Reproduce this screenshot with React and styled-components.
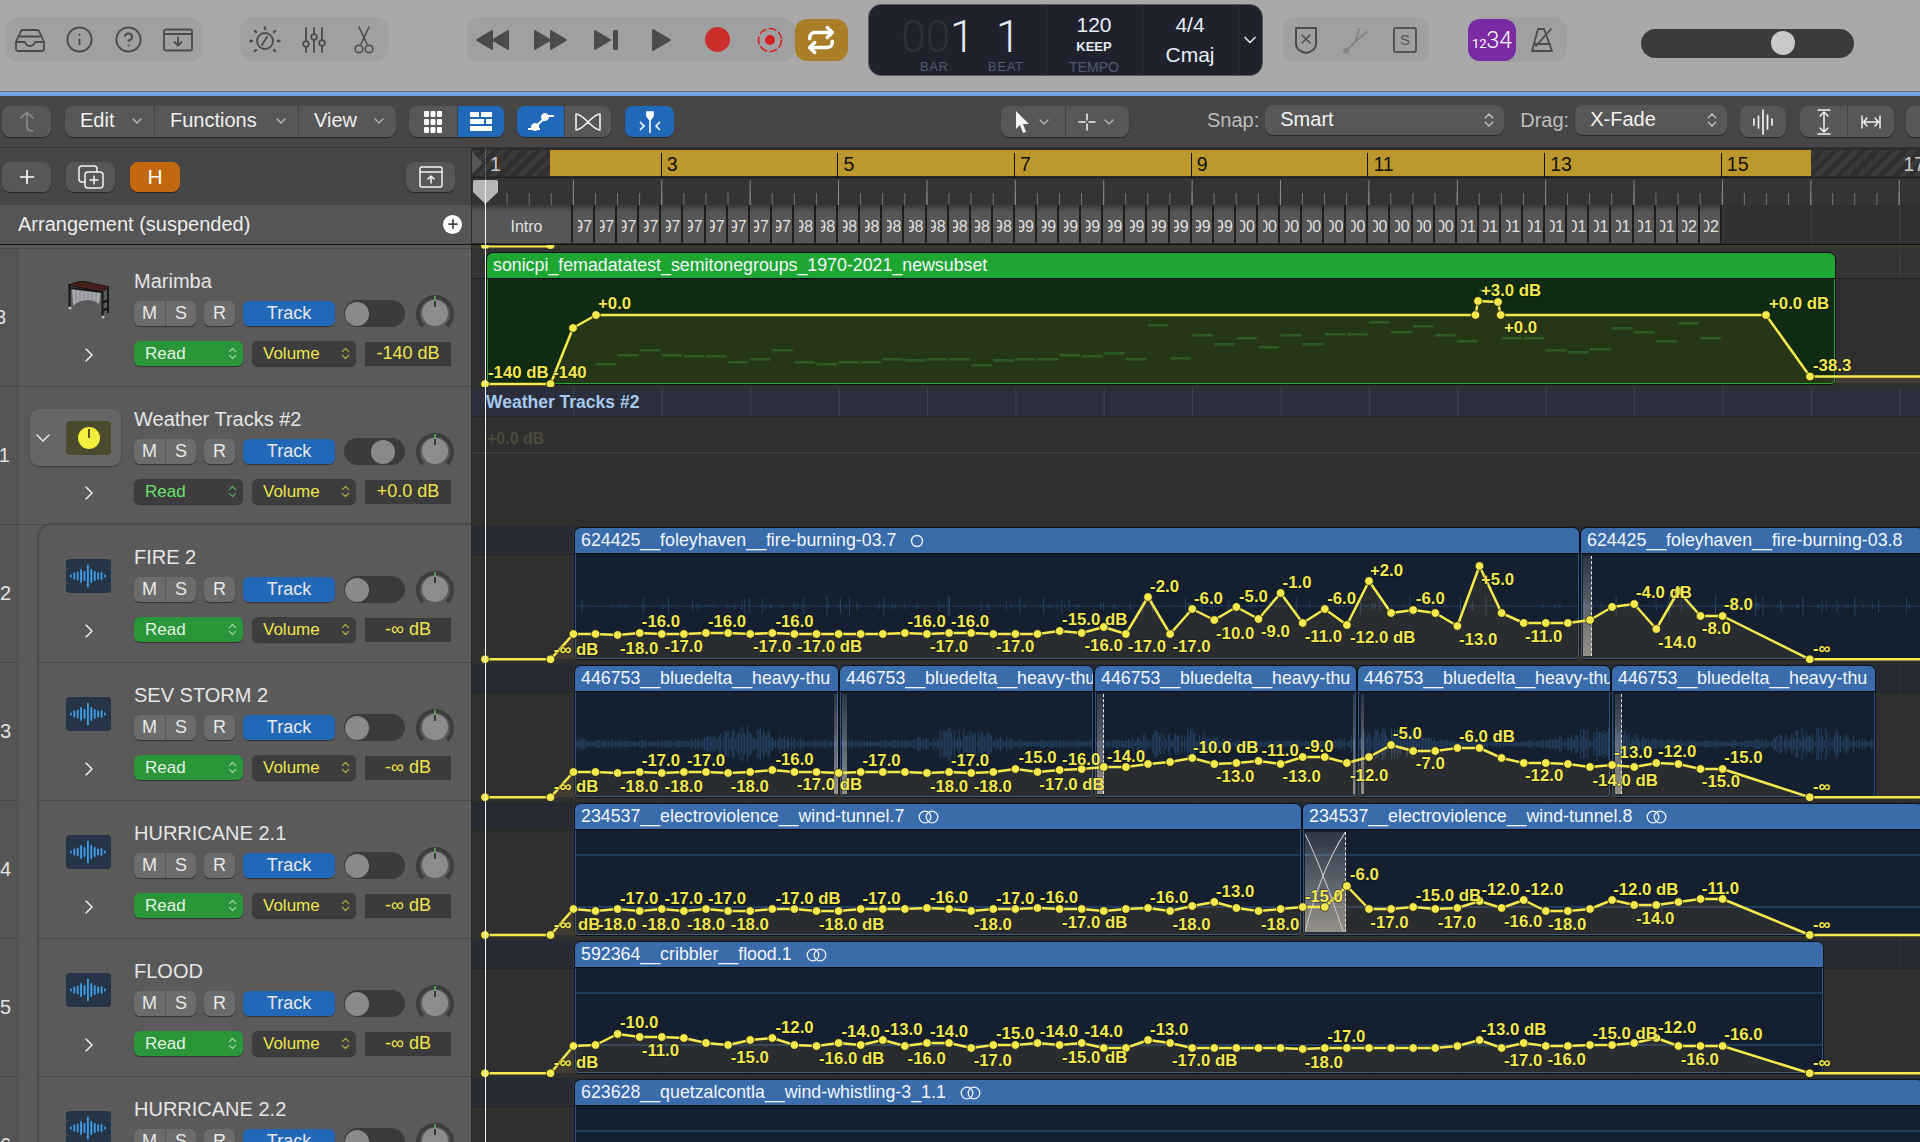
import styled, { createGlobalStyle } from 'styled-components'
import { ChevronDown, ChevronRight, ChevronsUpDown, CircleHelp, Info, Plus, Repeat } from 'lucide-react'

const BAR = 88.4
const BEAT = 22.1
const FIRST_BEAT = 573.4
const SANS = '"Liberation Sans", Arial, sans-serif'

const GlobalStyle = createGlobalStyle`
  html, body { margin: 0; padding: 0; background: #2f2f2f; }
  * { box-sizing: border-box; }
`

const Page = styled.div`
  width: 1920px;
  height: 1142px;
  overflow: hidden;
  display: flex;
  flex-direction: column;
  font-family: ${SANS};
  color: #e4e4e4;
`

/* top toolbar */
const TopBar = styled.div`
  height: 92px;
  flex: none;
  display: flex;
  align-items: center;
  padding: 0 0 12px 5px;
  background: #a9a9a9;
  border-bottom: 1px solid #6e6e6e;
`
const ToolGroup = styled.div`
  display: flex;
  align-items: center;
  flex: none;
  height: 45px;
  margin-left: ${p => p.$ml || 0}px;
  border-radius: 14px;
  background: #a0a0a0;
`
const ToolSlot = styled.div`
  width: ${p => p.$w || 49.5}px;
  height: 45px;
  flex: none;
  display: flex;
  align-items: center;
  justify-content: center;
  color: #4b4b4b;
`
const CycleButton = styled.div`
  width: 53px;
  height: 42px;
  flex: none;
  display: flex;
  align-items: center;
  justify-content: center;
  border-radius: 12px;
  background: #a97e27;
  color: #fff;
`
const Lcd = styled.div`
  width: 395px;
  height: 72px;
  flex: none;
  margin-left: 20px;
  display: flex;
  border-radius: 13px;
  background: #1f222c;
  border: 1px solid #5a5c62;
`
const LcdBar = styled.div`
  width: 108px;
  flex: none;
  padding-top: 13px;
`
const LcdBeat = styled.div`
  width: 70px;
  flex: none;
  padding-top: 13px;
  border-right: 1px solid #2c303b;
`
const Digits = styled.div`
  font-family: Roboto, ${SANS};
  font-weight: 300;
  font-size: 44px;
  line-height: 38px;
  color: #e4edf8;
  text-align: right;
  padding-right: ${p => p.$pr}px;
  span { color: #2c313d; }
`
const LcdLabel = styled.div`
  font-size: 13px;
  line-height: 16px;
  margin-top: 3px;
  letter-spacing: 0.6px;
  color: #4f5b70;
  text-align: right;
  padding-right: ${p => p.$pr}px;
`
const LcdColumn = styled.div`
  width: 96px;
  flex: none;
  display: flex;
  flex-direction: column;
  align-items: center;
  padding-top: 9px;
  border-right: 1px solid #2c303b;
`
const LcdValue = styled.div`
  font-size: ${p => p.$size || 21}px;
  line-height: 22px;
  margin-top: ${p => p.$mt || 0}px;
  color: ${p => p.$dim ? '#4f5b70' : '#e8eef6'};
  font-weight: ${p => p.$bold ? 700 : 400};
`
const LcdMore = styled.div`
  flex: 1;
  display: flex;
  align-items: center;
  justify-content: center;
  color: #dfe6f0;
`
const CountIn = styled.div`
  width: 48px;
  height: 42px;
  flex: none;
  display: flex;
  align-items: baseline;
  justify-content: center;
  padding-top: 8px;
  border-radius: 12px;
  background: #7a2ba4;
  color: #fff;
  font-family: Roboto, ${SANS};
  font-size: 23px;
  font-weight: 300;
  span { font-size: 13px; font-weight: 400; }
`
const VolumeTrack = styled.div`
  width: 213px;
  height: 29px;
  flex: none;
  margin: 7px 0 0 74px;
  padding-left: 130px;
  display: flex;
  align-items: center;
  border-radius: 15px;
  background: #3b3b3b;
`
const VolumeThumb = styled.div`
  width: 24px;
  height: 24px;
  border-radius: 50%;
  background: #c8c8c8;
`
const BlueRule = styled.div`
  height: 4px;
  flex: none;
  background: #6ea7e6;
`

/* control bar */
const ControlBar = styled.div`
  height: 52px;
  flex: none;
  display: flex;
  align-items: flex-start;
  padding: 10px 0 0 2px;
  background: #464646;
  border-bottom: 1px solid #333;
`
const Seg = styled.div`
  display: flex;
  flex: none;
  height: 31px;
  margin-left: ${p => p.$ml || 0}px;
  border-radius: 8px;
  overflow: hidden;
  background: #575757;
  box-shadow: 0 1px 1px rgba(0, 0, 0, 0.45);
`
const SegItem = styled.div`
  width: ${p => p.$w}px;
  flex: none;
  display: flex;
  align-items: center;
  justify-content: ${p => p.$menu ? 'space-between' : 'center'};
  gap: ${p => p.$gap || 0}px;
  padding: ${p => p.$menu ? '0 9px 2px 15px' : 0};
  font-size: 20px;
  color: #f0f0f0;
  background: ${p => p.$on ? '#2068b8' : 'transparent'};
  & + & { border-left: 1px solid #434343; }
  svg.chev { color: #b5b5b5; }
`
const BarLabel = styled.div`
  flex: none;
  height: 31px;
  line-height: 28px;
  margin-left: ${p => p.$ml}px;
  font-size: 20px;
  color: #bdbdbd;
`
const SelectBox = styled.div`
  width: ${p => p.$w}px;
  height: 30px;
  flex: none;
  margin: -1px 0 0 ${p => p.$ml}px;
  padding: 0 6px 1px 15px;
  display: flex;
  align-items: center;
  justify-content: space-between;
  border-radius: 8px;
  background: #575757;
  box-shadow: 0 1px 1px rgba(0, 0, 0, 0.45);
  font-size: 20px;
  color: #f2f2f2;
  svg { color: #bdbdbd; }
`

/* main split */
const Main = styled.div`
  flex: 1;
  min-height: 0;
  display: flex;
`
const LeftPanel = styled.div`
  width: 472px;
  flex: none;
  display: flex;
  flex-direction: column;
  border-right: 1px solid #2a2a2a;
  background: #5a5a5a;
`
const PanelTools = styled.div`
  height: 57px;
  flex: none;
  display: flex;
  align-items: flex-start;
  padding: 14px 16px 0 2px;
  background: #464646;
`
const PanelButton = styled.div`
  width: ${p => p.$w || 49}px;
  height: 30px;
  flex: none;
  display: flex;
  align-items: center;
  justify-content: center;
  margin-left: ${p => p.$auto ? 'auto' : `${p.$ml || 0}px`};
  border-radius: 8px;
  font-size: 21px;
  color: #fff;
  background: ${p => p.$accent ? '#c2680f' : '#575757'};
  box-shadow: 0 1px 1px rgba(0, 0, 0, 0.45);
`
const ArrangementHeader = styled.div`
  height: 40px;
  flex: none;
  display: flex;
  align-items: center;
  justify-content: space-between;
  padding: 0 9px 1px 18px;
  font-size: 20px;
  background: #555;
  border-bottom: 1px solid #111;
  color: #ececec;
`
const AddCircle = styled.div`
  width: 19px;
  height: 19px;
  display: flex;
  align-items: center;
  justify-content: center;
  border-radius: 50%;
  background: #fff;
  color: #444;
`
const PanelPeek = styled.div`
  height: 4px;
  flex: none;
  background: #5a5a5a;
  border-bottom: 1px solid #474747;
`

/* track header row */
const TrackRowWrap = styled.div`
  height: 138px;
  flex: none;
  display: flex;
`
const TrackNumber = styled.div`
  width: 18px;
  flex: none;
  display: flex;
  align-items: center;
  justify-content: flex-end;
  overflow: hidden;
  padding-right: ${p => p.$pr}px;
  font-size: 20px;
  background: #555;
  color: #e2e2e2;
  border-right: 1px solid #474747;
  border-bottom: 1px solid #474747;
  white-space: nowrap;
`
const TrackIndent = styled.div`
  width: 19px;
  flex: none;
  background: #5a5a5a;
`
const TrackBody = styled.div`
  flex: 1;
  min-width: 0;
  display: flex;
  margin-top: ${p => p.$first ? '-2px' : 0};
  background: #5a5a5a;
  border-bottom: 1px solid #474747;
  border-left: ${p => p.$nested ? '2px solid #4a4a4a' : 'none'};
  border-top: ${p => p.$first ? '2px solid #4a4a4a' : 'none'};
  border-top-left-radius: ${p => p.$first ? '15px' : 0};
`
const IconColumn = styled.div`
  flex: 1;
  min-width: 0;
  margin-right: 13px;
  padding-top: 22px;
`
const IconFrame = styled.div`
  height: 57px;
  max-width: 91px;
  margin-left: auto;
  display: flex;
  align-items: center;
  justify-content: flex-end;
  padding-right: 10px;
  position: relative;
  border-radius: 9px;
  background: ${p => p.$folder ? '#666' : 'transparent'};
  box-shadow: ${p => p.$folder ? '0 1px 2px rgba(0,0,0,.35)' : 'none'};
`
const FolderToggle = styled(ChevronDown)`
  position: absolute;
  left: 1px;
  top: 17px;
  color: #e8e8e8;
`
const ExpandRow = styled.div`
  width: 45px;
  height: 16px;
  margin: 19px 10px 0 auto;
  display: flex;
  align-items: center;
  justify-content: center;
  color: #ececec;
`
const TrackIconBox = styled.div`
  width: 45px;
  height: 34px;
  display: flex;
  align-items: center;
  justify-content: center;
  border-radius: 4px;
  background: ${p => p.$tone || 'transparent'};
`
const Controls = styled.div`
  width: 337px;
  flex: none;
  padding-top: 20px;
`
const TrackTitle = styled.div`
  height: 24px;
  line-height: 24px;
  font-size: 20px;
  color: #e6e6e6;
  white-space: nowrap;
`
const ControlLine = styled.div`
  height: 25px;
  display: flex;
  align-items: center;
  margin-top: ${p => p.$mt}px;
`
const SmallGroup = styled.div`
  height: 25px;
  flex: none;
  display: flex;
  margin-left: ${p => p.$ml || 0}px;
  border-radius: 6px;
  overflow: hidden;
  background: #6c6c6c;
  box-shadow: 0 1px 1px rgba(0, 0, 0, 0.45);
`
const SmallKey = styled.div`
  width: ${p => p.$w}px;
  display: flex;
  align-items: center;
  justify-content: center;
  font-size: 18px;
  color: #e8e8e8;
  background: ${p => p.$blue ? '#2268b8' : 'transparent'};
  & + & { border-left: 1px solid #555; }
`
const Toggle = styled.div`
  width: 61px;
  height: 27px;
  flex: none;
  margin-left: 9px;
  padding: 0 1px;
  display: flex;
  align-items: center;
  justify-content: ${p => p.$on ? 'flex-end' : 'flex-start'};
  padding-right: ${p => p.$on ? '10px' : '1px'};
  border-radius: 14px;
  background: #3b3b3b;
  div {
    width: 24px;
    height: 24px;
    border-radius: 50%;
    background: #8a8a8a;
  }
`
const KnobSvg = styled.svg`
  flex: none;
  margin: -2px 0 0 11px;
`
const PopUp = styled.div`
  width: ${p => p.$w}px;
  height: 25px;
  flex: none;
  margin-left: ${p => p.$ml || 0}px;
  padding: 0 3px 0 11px;
  display: flex;
  align-items: center;
  justify-content: space-between;
  border-radius: 6px;
  font-size: 17px;
  color: ${p => p.$color};
  background: ${p => p.$bg};
  box-shadow: 0 1px 1px rgba(0, 0, 0, 0.45);
  svg { opacity: 0.65; }
`
const ValueBox = styled.div`
  width: 86px;
  height: 24px;
  flex: none;
  margin-left: 9px;
  display: flex;
  align-items: center;
  justify-content: center;
  font-size: 18px;
  color: #f0e44c;
  background: #3b3b3b;
`

/* timeline */
const Timeline = styled.div`
  position: relative;
  flex: 1;
  min-width: 0;
  display: flex;
  flex-direction: column;
  background: #2f2f2f;
`
const RulerTop = styled.div`
  position: relative;
  height: 30px;
  flex: none;
  display: flex;
  padding: 2px 0 1px;
  background: #2c2c2c;
  border-bottom: 1px solid #1c1c1c;
`
const Hatch = styled.div`
  width: ${p => p.$w ? `${p.$w}px` : 'auto'};
  flex: ${p => p.$w ? 'none' : 1};
  background: repeating-linear-gradient(135deg, #3a3a3a 0 5px, #303030 5px 10px);
`
const Cycle = styled.div`
  width: 1260.6px;
  flex: none;
  background: #bd982c;
`
const RulerNumbers = styled.div`
  position: absolute;
  inset: 0 0 0 12px;
  display: flex;
`
const RulerCell = styled.div`
  width: 176.7px;
  flex: none;
  height: 24px;
  margin-top: 5px;
  padding-left: 5px;
  line-height: 22px;
  font-size: 19.5px;
  color: ${p => p.$light ? '#c9c9c9' : '#111'};
  border-left: 1.5px solid ${p => p.$light ? 'transparent' : '#111'};
`
const StartFlag = styled.div`
  position: absolute;
  left: 0;
  top: 4px;
  width: 0;
  height: 0;
  border-top: 11px solid transparent;
  border-bottom: 11px solid transparent;
  border-left: 11px solid #565656;
`
const BeatStrip = styled.div`
  height: 27px;
  flex: none;
  background-color: #343434;
  background-image:
    linear-gradient(to right, #8a8a8a 1px, transparent 1px),
    linear-gradient(to right, #757575 1px, transparent 1px);
  background-size: ${BAR}px 25px, ${BEAT}px 12px;
  background-position: 12.5px bottom, 12.5px bottom;
  background-repeat: repeat-x;
`
const MarkerStrip = styled.div`
  height: 40px;
  flex: none;
  display: flex;
  padding-bottom: 1px;
  background-color: #303030;
  background-image: linear-gradient(to right, #3f3f3f 1px, transparent 1px);
  background-size: ${BAR}px 100%;
  background-position: 13px 0;
  border-bottom: 1px solid #111;
`
const Marker = styled.div`
  width: ${p => p.$w}px;
  flex: none;
  display: flex;
  align-items: center;
  justify-content: ${p => p.$intro ? 'center' : 'flex-end'};
  padding: ${p => p.$intro ? '5px 0 0 10px' : '5px 1px 0 0'};
  font-size: 16px;
  color: #e0e0e0;
  white-space: nowrap;
  background: linear-gradient(#3b3b3b, #565656 7px);
  border-right: 2px solid #1e1e1e;
`
const MarkerYear = styled.div`
  width: 14.5px;
  overflow: hidden;
  display: flex;
  justify-content: flex-end;
`
const LanePeek = styled.svg`
  height: 4px;
  width: 100%;
  flex: none;
  display: block;
  background: #3a392f;
`
const Lane = styled.div`
  position: relative;
  height: 138px;
  flex: none;
  overflow: hidden;
`
const LaneStrip = styled.div`
  height: 29px;
  margin-top: 1px;
  border-bottom: 1px solid #242424;
  background-color: ${p => p.$tone};
  background-image: linear-gradient(to right, ${p => p.$line} 1px, transparent 1px);
  background-size: ${BAR}px 100%;
  background-position: 13px 0;
  padding: 4px 0 0 14px;
  font-size: 17.5px;
  font-weight: 700;
  color: #a6c9f2;
`
const LaneGuide = styled.div`
  margin-top: 35px;
  height: 2px;
  background: #3b3b3b;
  position: relative;
`
const GhostValue = styled.div`
  position: absolute;
  left: 15px;
  top: -22px;
  font-size: 16px;
  font-weight: 700;
  color: #4b4a3b;
`
const Region = styled.div`
  position: absolute;
  top: ${p => p.$top || 2}px;
  left: ${p => p.$left}px;
  width: ${p => p.$width}px;
  height: 133px;
  display: flex;
  flex-direction: column;
  overflow: hidden;
  border: 1.5px solid #0e1116;
  border-radius: 7px 7px 5px 5px;
`
const RegionHeader = styled.div`
  height: 26px;
  flex: none;
  display: flex;
  align-items: center;
  gap: 14px;
  padding-left: 6px;
  overflow: hidden;
  white-space: nowrap;
  font-size: 17.8px;
  color: #f2f6fb;
  background: ${p => p.$bg};
  border-bottom: 1.5px solid #0a0d12;
`
const RegionBody = styled.div`
  flex: 1;
  min-height: 0;
  background: ${p => p.$bg};
  border: 1px solid ${p => p.$edge};
  border-top: none;
  border-radius: 0 0 4px 4px;
`
const WaveSvg = styled.svg`
  display: block;
  width: 100%;
  height: 100%;
`
const Crossfade = styled.div`
  position: absolute;
  top: 31px;
  left: ${p => p.$left}px;
  width: ${p => p.$width}px;
  height: 100px;
  background: linear-gradient(to top, rgba(215, 215, 215, 0.6), rgba(215, 215, 215, 0.12));
  border-right: ${p => p.$dashed ? '1px dashed #e6e6e6' : 'none'};
  svg { display: block; width: 100%; height: 100%; }
`
const AutomationSvg = styled.svg`
  position: absolute;
  left: 0;
  top: 0;
  pointer-events: none;
`
const AutoLabel = styled.text`
  font-family: ${SANS};
  font-size: 16.8px;
  font-weight: 700;
  fill: #f3e84f;
  stroke: rgba(0, 0, 0, 0.45);
  stroke-width: 1.5px;
  paint-order: stroke;
  dominant-baseline: central;
`
const PlayheadLine = styled.div`
  position: absolute;
  left: 12.5px;
  top: 32px;
  bottom: 0;
  width: 1.5px;
  background: #f4f4f4;
  z-index: 6;
`
const PlayheadHead = styled.svg`
  position: absolute;
  left: 0;
  top: 31px;
  z-index: 5;
`
const PlayheadDots = styled.div`
  position: absolute;
  left: 13px;
  top: 0;
  height: 31px;
  border-left: 1px dotted #8a8a8a;
`

/* drawings */
const Line = ({ w, h, children, color = 'currentColor', sw = 1.8 }) => (
  <svg width={w} height={h} viewBox={`0 0 ${w} ${h}`} fill="none" stroke={color} strokeWidth={sw} strokeLinecap="round" strokeLinejoin="round">
    {children}
  </svg>
)
const TrayIcon = () => (
  <Line w={32} h={24}>
    <path d="M2 14 7 3a2 2 0 0 1 2-1h14a2 2 0 0 1 2 1l5 11v7a2 2 0 0 1-2 2H4a2 2 0 0 1-2-2Z" />
    <path d="M2 14h9c1 3 2.5 4 5 4s4-1 5-4h9M6 8.5h20" />
  </Line>
)
const WindowDownIcon = () => (
  <Line w={32} h={24}>
    <rect x="2" y="1.5" width="28" height="21" rx="2" />
    <path d="M2 6h28M16 9.5v8M12.5 14l3.5 3.5 3.500-3.500" />
  </Line>
)
const DialIcon = () => (
  <Line w={32} h={28}>
    <circle cx="16" cy="15" r="8" />
    <path d="m13 19 5-8" />
    <path d="M16 1.5v1.5M6 5l1 1M26 5l-1 1M1.5 15H3M29 15h1.5M6 25l1-1M26 25l-1-1" strokeWidth="2.4" />
  </Line>
)
const MixerIcon = () => (
  <Line w={24} h={28}>
    <path d="M4 2v24M12 2v24M20 2v24" />
    <circle cx="4" cy="18" r="2.8" fill="#a0a0a0" />
    <circle cx="12" cy="11" r="2.8" fill="#a0a0a0" />
    <circle cx="20" cy="17" r="2.8" fill="#a0a0a0" />
  </Line>
)
const ScissorsIcon = () => (
  <Line w={20} h={30} sw={1.6}>
    <path d="M15 2 7 19M5 2l8 17" />
    <circle cx="5" cy="24" r="3.8" />
    <circle cx="15" cy="24" r="3.8" />
  </Line>
)
const Glyph = ({ w, h, d }) => (
  <svg width={w} height={h} viewBox={`0 0 ${w} ${h}`} fill="currentColor" stroke="currentColor" strokeWidth="2" strokeLinejoin="round">
    <path d={d} />
  </svg>
)
const RecordIcon = () => (
  <svg width="25" height="25"><circle cx="12.5" cy="12.5" r="12.5" fill="#cc2f2b" /></svg>
)
const CaptureIcon = () => (
  <svg width="26" height="26" fill="none">
    <circle cx="13" cy="13" r="11.5" stroke="#d3211f" strokeWidth="1.6" strokeDasharray="8 2.5" />
    <circle cx="13" cy="13" r="5" fill="#d3211f" />
  </svg>
)
const ShieldIcon = () => (
  <Line w={24} h={30} sw={2}>
    <path d="M2 3h20v16c0 5-5 8-10 9-5-1-10-4-10-9Z" />
    <path d="m8 10 8 8M16 10l-8 8" strokeWidth="1.5" />
  </Line>
)
const ForkIcon = () => (
  <Line w={28} h={30} color="#858585" sw={2}>
    <path d="m5 25 9-9M14 16l3-12M14 16l11-9" />
    <circle cx="4" cy="26" r="2" fill="#858585" />
  </Line>
)
const SoloBoxIcon = () => (
  <svg width="24" height="26" fill="none">
    <rect x="1" y="1" width="22" height="24" rx="2" stroke="#555" strokeWidth="2" />
    <text x="12" y="18" textAnchor="middle" fontSize="15" fontFamily={SANS} fill="#555">S</text>
  </svg>
)
const MetronomeIcon = () => (
  <Line w={26} h={28}>
    <path d="M9 3h6l8 22H3Z" />
    <path d="M6 18h15M3 25h20M7 20 22 3" />
  </Line>
)
const GridIcon = () => (
  <svg width="18" height="22" fill="#fff">
    {[0, 1, 2].flatMap(r => [0, 1, 2].map(c => <rect key={`${r}${c}`} x={c * 6.5} y={r * 8} width="5" height="6" rx="1" />))}
  </svg>
)
const ListIcon = () => (
  <svg width="22" height="20" fill="#fff">
    <rect width="9" height="5" /><rect x="11" width="11" height="5" />
    <rect y="7" width="14" height="5" /><rect x="16" y="7" width="6" height="5" />
    <rect y="14" width="22" height="5" />
  </svg>
)
const NodeIcon = () => (
  <svg width="28" height="22" fill="#fff" stroke="#fff">
    <path d="M7 17 19 6M1 18h12M18 5h9" strokeWidth="2" />
    <circle cx="8" cy="16" r="3.5" /><circle cx="18" cy="6" r="3.5" />
  </svg>
)
const FlexIcon = () => (
  <Line w={28} h={22} color="#f2f2f2" sw={1.6}>
    <path d="M2 3v16c8 0 16-16 24-16v16C18 19 10 3 2 3Z" />
  </Line>
)
const PinIcon = () => (
  <svg width="22" height="24" fill="none" stroke="#fff" strokeWidth="1.6">
    <path d="M8 2h6v4l-2 3h-2L8 6Z" fill="#fff" />
    <path d="M11 9v14M1 12l4 4-4 4M21 12l-4 4 4 4" />
  </svg>
)
const PointerIcon = () => (
  <svg width="16" height="24" fill="#f4f4f4"><path d="M2 1v18l4-4 3 8 3-1-3-8h6Z" /></svg>
)
const CrossIcon = () => (
  <Line w={18} h={18} color="#f2f2f2" sw={1.5}>
    <path d="M9 1v6M9 11v6M1 9h6M11 9h6" />
  </Line>
)
const WaveButtonIcon = () => (
  <Line w={22} h={26} color="#f0f0f0" sw={1.7}>
    <path d="M2 10v6M6.5 7v12M11 1v24M15.5 6v14M20 10v6" />
  </Line>
)
const ZoomVIcon = () => (
  <Line w={18} h={26} color="#f0f0f0" sw={1.5}>
    <path d="M3 1h12M3 25h12M9 3v20M5 7l4-4 4 4M5 19l4 4 4-4" />
  </Line>
)
const ZoomHIcon = () => (
  <Line w={20} h={16} color="#f0f0f0" sw={1.5}>
    <path d="M1 2v12M19 2v12M3 8h14M6 4 2.5 8 6 12M14 4l3.5 4L14 12" />
  </Line>
)
const UpTurnIcon = () => (
  <Line w={18} h={24} color="#8d8d8d" sw={1.6}>
    <path d="M9 2 3 8M9 2l6 6M9 2v14c0 3 2 5 6 5" />
  </Line>
)
const StackPlusIcon = () => (
  <Line w={26} h={24} color="#f4f4f4" sw={1.5}>
    <rect x="1" y="1" width="18" height="16" rx="3" />
    <rect x="7" y="7" width="18" height="16" rx="3" fill="#575757" />
    <path d="M16 11v8M12 15h8" />
  </Line>
)
const BoxUpIcon = () => (
  <Line w={24} h={24} color="#f4f4f4" sw={1.5}>
    <rect x="1" y="2" width="22" height="20" rx="2" />
    <path d="M1 7h22M12 18v-7M9 14l3-3 3 3" />
  </Line>
)
const MarimbaIcon = () => (
  <svg width="42" height="38" viewBox="0 0 42 38" fill="none">
    <path d="M4 7 33 11 31 23C24 17 12 18 5 25Z" fill="#b9bcc2" opacity="0.8" />
    <path d="M8 9v13M12 9v11M16 10v9M20 10v8M24 10v9M28 11v10" stroke="#83868c" strokeWidth="1" />
    <path d="M0 4 14 0 41 6 34 11Z" fill="#45201a" stroke="#1c0f0c" strokeWidth="1" />
    <path d="M1.5 5v21M34.5 11v24M40 7v25M2 7l32 4M34 22l6-3M34 30l6-3" stroke="#171717" strokeWidth="2" />
    <circle cx="2" cy="27" r="1.5" fill="#bbb" /><circle cx="35" cy="36" r="1.5" fill="#bbb" />
  </svg>
)
const WaveTrackIcon = () => (
  <svg width="37" height="24" fill="#3f9fe8">
    {[3, 7, 9, 14, 10, 23, 14, 10, 7, 8, 3].map((h, i) => (
      <rect key={i} x={i * 3.4} y={12 - h / 2} width="1.8" height={h} rx="0.9" />
    ))}
  </svg>
)
const ClockIcon = () => (
  <svg width="24" height="24">
    <circle cx="12" cy="12" r="11" fill="#f4ee3c" />
    <path d="M12 3v9" stroke="#222" strokeWidth="1.5" />
  </svg>
)
const Knob = () => (
  <KnobSvg width="38" height="38" viewBox="0 0 38 38" fill="none">
    <path d="M7 32a17 17 0 1 1 24 0" stroke="#3d3d3d" strokeWidth="4" />
    <circle cx="19" cy="19" r="13" fill="#8c8c8c" />
    <path d="M19 2v5" stroke="#5fd25f" strokeWidth="1.2" />
    <path d="M19 7v6" stroke="#1c1c1c" strokeWidth="1.5" />
  </KnobSvg>
)
const LoopCircle = () => (
  <svg width="14" height="16" fill="none" stroke="#eef3fa" strokeWidth="1.4"><ellipse cx="7" cy="8" rx="5.5" ry="5.5" /></svg>
)
const LinkedCircles = () => (
  <svg width="22" height="16" fill="none" stroke="#eef3fa" strokeWidth="1.3">
    <circle cx="7" cy="8" r="5.8" /><circle cx="14" cy="8" r="5.8" />
  </svg>
)

/* deterministic wave shapes */
const noise = i => {
  const s = Math.sin(i * 12.9898) * 43758.5453
  return s - Math.floor(s)
}
const wavePath = (width, kind, origin) => {
  let d = ''
  for (let x = 0; x < width; x += 1.5) {
    const n = noise(Math.round((x + origin) / 1.5))
    let a
    if (kind === 'heavy') {
      const env = Math.abs(Math.sin((x + origin) / 68))
      a = 1.5 + n * (2.5 + Math.pow(env, 6) * 14)
    } else {
      a = 0.7 + Math.pow(n, 16) * 10
    }
    d += `M${x} ${52 - a}V${52 + a}`
  }
  return d
}
const RegionWave = ({ width, kind, origin }) => (
  <WaveSvg viewBox={`0 0 ${width} 104`} preserveAspectRatio="none">
    {kind === 'stereo'
      ? <path d={`M0 25H${width}M0 77H${width}`} stroke="#27456c" strokeWidth="1.5" />
      : kind && <path d={wavePath(width, kind, origin)} stroke="#29466c" strokeWidth="0.9" fill="none" />}
  </WaveSvg>
)

/* automation */
const Automation = ({ ys, start, end, labels, notes }) => {
  const beats = ys.map((y, i) => [FIRST_BEAT + i * BEAT, y])
  const pts = [[485, start], [550.5, start], ...beats, ...end]
  const tail = pts[pts.length - 1]
  const line = [...pts, [1920, tail[1]]].map(p => p.join(',')).join(' ')
  return (
    <AutomationSvg width="1448" height="138" viewBox="472 0 1448 138">
      <polygon points={`485,134 ${line} 1920,134`} fill="rgba(240, 170, 50, 0.1)" />
      {notes && notes.map((y, i) => (
        <rect key={i} x={FIRST_BEAT + (i + 1) * BEAT} y={y} width="20.5" height="2.6" fill="#2e5a25" />
      ))}
      <polyline points={line} fill="none" stroke="#f5e94e" strokeWidth="2.5" strokeLinejoin="round" />
      {pts.map((p, i) => (
        <circle key={i} cx={p[0]} cy={p[1]} r="4.3" fill="#f5e94e" stroke="#1c1c10" strokeWidth="0.7" />
      ))}
      {labels.map((l, i) => <AutoLabel key={i} x={l[1]} y={l[2]}>{l[0]}</AutoLabel>)}
    </AutomationSvg>
  )
}

/* data */
const TRACKS = [
  { name: 'Marimba', number: '3', pr: 11, icon: 'marimba', value: '-140 dB' },
  { name: 'Weather Tracks #2', number: '11', pr: 7, icon: 'folder', on: true, value: '+0.0 dB', muted: true },
  { name: 'FIRE 2', number: '2', pr: 6, icon: 'wave', nested: true, first: true, value: '-∞ dB' },
  { name: 'SEV STORM 2', number: '3', pr: 6, icon: 'wave', nested: true, value: '-∞ dB' },
  { name: 'HURRICANE 2.1', number: '4', pr: 6, icon: 'wave', nested: true, value: '-∞ dB' },
  { name: 'FLOOD', number: '5', pr: 6, icon: 'wave', nested: true, value: '-∞ dB' },
  { name: 'HURRICANE 2.2', number: '6', pr: 6, icon: 'wave', nested: true, value: '-∞ dB' },
]

const MARKER_YEARS = [1997, 1998, 1999, 2000, 2001].flatMap(y => Array(10).fill(y)).concat([2002, 2002])
const RULER_BARS = [1, 3, 5, 7, 9, 11, 13, 15, 17]

const MARIMBA_AUTO = {
  ys: [],
  start: 135,
  end: [[573, 79], [596, 66], [1475.5, 66], [1478, 52], [1498, 53], [1500.7, 66], [1766, 66], [1810, 127.5]],
  notes: [114, 105, 100, 105, 106, 106, 112, 109, 100, 112, 114, 112, 112, 109, 110, 109, 109, 115, 110, 109, 109, 105, 106, 103, 109, 75, 108, 85,
    94, 88, 97, 85, 94, 84, 84, 72, 82, 76, 85, 91, 40, 88, 88, 100, 102, 99, 78, 82, 91, 73, 88],
  labels: [
    ['+0.0', 598, 54], ['-140 dB', 488, 123], ['-140', 553, 123], ['+3.0 dB', 1481, 41],
    ['+0.0', 1504, 78], ['+0.0 dB', 1769, 54], ['-38.3', 1813, 116],
  ],
}

const FIRE_AUTO = {
  start: 134.3,
  ys: [109, 109, 110, 108, 109, 109, 108, 108, 109, 108, 109, 109, 109, 109, 109, 108, 109, 108, 108, 109, 109, 109, 106, 108, 102, 109, 72, 109, 84,
    95, 82, 94, 68, 98, 84, 100, 56, 88, 85, 88, 101, 41, 88, 98, 98, 98, 95, 82, 79, 104, 66, 91, 91],
  end: [[1809.7, 134.3]],
  labels: [
    ['-∞ dB', 553.8, 124], ['-18.0', 620, 123.3], ['-17.0', 664.6, 121.7], ['-16.0', 641.8, 96], ['-16.0', 707.9, 96], ['-16.0', 775.4, 96],
    ['-17.0', 753, 121.7], ['-17.0 dB', 796.8, 121.7], ['-16.0', 907.6, 96], ['-16.0', 950.9, 96], ['-17.0', 929.9, 121.7], ['-17.0', 996, 121.7],
    ['-15.0 dB', 1062.1, 94.3], ['-16.0', 1084.5, 120.3], ['-17.0', 1127.8, 121.7], ['-2.0', 1150.1, 61.7], ['-17.0', 1172.4, 121.7],
    ['-6.0', 1194, 73.7], ['-10.0', 1216, 108.3], ['-5.0', 1239, 71], ['-9.0', 1261, 106.7], ['-1.0', 1282.6, 57], ['-11.0', 1304.7, 111.7],
    ['-6.0', 1327.2, 73.7], ['-12.0 dB', 1350, 112.3], ['+2.0', 1369.9, 45], ['-6.0', 1415.8, 73.3], ['-13.0', 1459, 114], ['+5.0', 1481, 54.3],
    ['-11.0', 1525, 111.3], ['-4.0 dB', 1636, 67.7], ['-14.0', 1658, 117.3], ['-8.0', 1724, 79.7], ['-8.0', 1701.8, 103.7], ['-∞', 1813, 123.7],
  ],
}

const STORM_AUTO = {
  start: 134.3,
  ys: [109, 109, 110, 109, 110, 109, 109, 110, 109, 107, 109, 109, 110, 109, 109, 109, 110, 109, 110, 109, 106, 109, 107, 106, 104, 104, 101, 99, 95,
    101, 100, 98, 101, 94, 94, 100, 94, 82, 88, 88, 85, 85, 95, 100, 100, 101, 104, 102, 104, 100, 101, 106, 106],
  end: [[1809.7, 134.3]],
  labels: [
    ['-∞ dB', 553.8, 123], ['-17.0', 641.8, 97.7], ['-17.0', 686.9, 97.7], ['-16.0', 775.4, 96], ['-18.0', 620, 123], ['-18.0', 664.6, 123],
    ['-18.0', 730.7, 123], ['-17.0 dB', 796.8, 121.7], ['-17.0', 862.4, 97.7], ['-17.0', 950.9, 97.7], ['-15.0', 1018.4, 94.7], ['-16.0', 1062.1, 96],
    ['-14.0', 1106.8, 93.7], ['-18.0', 929.9, 123], ['-18.0', 973.7, 123], ['-17.0 dB', 1039.3, 121.7], ['-10.0 dB', 1193, 84.3], ['-11.0', 1261.5, 87],
    ['-9.0', 1304.7, 83], ['-13.0', 1216, 113.7], ['-13.0', 1282.6, 113.7], ['-12.0', 1350, 112.7], ['-5.0', 1392.8, 70.7], ['-6.0 dB', 1459, 73.7],
    ['-7.0', 1415.8, 100.3], ['-12.0', 1525, 112.7], ['-14.0 dB', 1592.5, 117], ['-13.0', 1614, 89.7], ['-12.0', 1658, 88.3], ['-15.0', 1724.3, 94],
    ['-15.0', 1701.8, 118.3], ['-∞', 1813, 123],
  ],
}

const HURRICANE_AUTO = {
  start: 134,
  ys: [108, 110, 108, 110, 108, 110, 108, 110, 110, 108, 108, 110, 110, 108, 108, 108, 107, 108, 110, 108, 108, 107, 108, 108, 110, 108, 107, 110, 105,
    101, 107, 110, 108, 106, 106, 85, 108, 108, 106, 108, 107, 100, 107, 99, 110, 110, 108, 99, 104, 104, 101, 98, 98],
  end: [[1809.7, 134]],
  labels: [
    ['-∞', 553.8, 123.7], ['dB', 578, 123], ['-18.0', 598, 123], ['-18.0', 641.8, 123], ['-18.0', 686.9, 123], ['-18.0', 730.7, 123],
    ['-17.0', 620, 97.3], ['-17.0', 664.6, 97.3], ['-17.0', 707.9, 97.3], ['-17.0 dB', 775.4, 97.3], ['-17.0', 862.4, 97.3], ['-16.0', 929.9, 96],
    ['-17.0', 996, 97.3], ['-16.0', 1039.8, 96], ['-16.0', 1150.1, 96], ['-18.0 dB', 819, 123], ['-18.0', 973.7, 123], ['-17.0 dB', 1062.1, 121.7],
    ['-18.0', 1172.4, 123], ['-13.0', 1216, 90], ['-18.0', 1261, 123], ['-15.0', 1304.7, 95], ['-6.0', 1350, 73.3], ['-17.0', 1370.3, 121.7],
    ['-15.0 dB', 1415.8, 94.7], ['-17.0', 1437.8, 121.7], ['-12.0', 1481.4, 88.3], ['-12.0', 1525, 88.3], ['-16.0', 1504, 120], ['-18.0', 1548, 123],
    ['-12.0 dB', 1613.2, 88.3], ['-14.0', 1636, 117], ['-11.0', 1701.8, 87], ['-∞', 1813, 123.3],
  ],
}

const FLOOD_AUTO = {
  start: 134.3,
  ys: [107, 106, 95, 98, 98, 99, 104, 106, 101, 99, 106, 107, 104, 106, 101, 107, 104, 104, 109, 106, 106, 104, 106, 104, 109, 109, 101, 104, 109,
    109, 109, 109, 109, 110, 109, 109, 109, 109, 109, 109, 107, 101, 109, 104, 107, 107, 106, 106, 104, 99, 107, 107, 107],
  end: [[1809.7, 134.3]],
  labels: [
    ['-∞ dB', 553.8, 123], ['-10.0', 620, 83.7], ['-11.0', 641.8, 111], ['-15.0', 730.7, 118.3], ['-12.0', 775.4, 88.3], ['-14.0', 841.5, 92.7],
    ['-16.0 dB', 819, 119.7], ['-13.0', 884.3, 90], ['-14.0', 929.9, 92.7], ['-16.0', 907.6, 119.7], ['-17.0', 973.7, 121], ['-15.0', 996, 94.3],
    ['-14.0', 1039.8, 92.7], ['-14.0', 1084.5, 92.7], ['-15.0 dB', 1062.1, 118.3], ['-13.0', 1150.1, 90], ['-17.0 dB', 1172, 121.7], ['-17.0', 1327.2, 97],
    ['-18.0', 1304.7, 123], ['-13.0 dB', 1481, 90], ['-17.0', 1504, 121], ['-16.0', 1547.5, 120], ['-15.0 dB', 1592.5, 94.3], ['-12.0', 1658, 88.3],
    ['-16.0', 1724.3, 95.7], ['-16.0', 1680.7, 120], ['-∞', 1813, 123],
  ],
}

const STORM_NAME = '446753__bluedelta__heavy-thu'
const AUDIO_LANES = [
  {
    auto: FIRE_AUTO,
    regions: [
      { x: 574, to: 1580, name: '624425__foleyhaven__fire-burning-03.7', icon: 'loop', wave: 'mono' },
      { x: 1580, to: 1924, name: '624425__foleyhaven__fire-burning-03.8', wave: 'mono' },
    ],
    fades: [{ x: 1583, to: 1592, dashed: true }],
  },
  {
    auto: STORM_AUTO,
    regions: [
      { x: 574, to: 839, name: STORM_NAME, wave: 'heavy' },
      { x: 839, to: 1094, name: STORM_NAME, wave: 'heavy' },
      { x: 1094, to: 1357, name: STORM_NAME, wave: 'heavy' },
      { x: 1357, to: 1611, name: STORM_NAME, wave: 'heavy' },
      { x: 1611, to: 1876, name: STORM_NAME, wave: 'heavy' },
    ],
    fades: [
      { x: 834, to: 838 }, { x: 842, to: 847 }, { x: 1097, to: 1104, dashed: true }, { x: 1353, to: 1355 }, { x: 1361, to: 1364 }, { x: 1615, to: 1622, dashed: true },
    ],
  },
  {
    auto: HURRICANE_AUTO,
    regions: [
      { x: 574, to: 1302, name: '234537__electroviolence__wind-tunnel.7', icon: 'linked', wave: 'stereo' },
      { x: 1302, to: 1924, name: '234537__electroviolence__wind-tunnel.8', icon: 'linked', wave: 'stereo' },
    ],
    fades: [{ x: 1304.7, to: 1346, dashed: true, cross: true }],
  },
  {
    auto: FLOOD_AUTO,
    regions: [{ x: 574, to: 1824, name: '592364__cribbler__flood.1', icon: 'linked', wave: 'stereo' }],
    fades: [],
  },
  {
    regions: [{ x: 574, to: 1924, name: '623628__quetzalcontla__wind-whistling-3_1.1', icon: 'linked', wave: 'stereo' }],
    fades: [],
  },
]

const TrackRow = ({ track }) => (
  <TrackRowWrap>
    <TrackNumber $pr={track.pr}>{track.number}</TrackNumber>
    {track.nested && <TrackIndent />}
    <TrackBody $nested={track.nested} $first={track.first}>
      <IconColumn>
        <IconFrame $folder={track.icon === 'folder'}>
          {track.icon === 'folder' && <FolderToggle size={24} strokeWidth={1.5} />}
          {track.icon === 'marimba' && <TrackIconBox><MarimbaIcon /></TrackIconBox>}
          {track.icon === 'folder' && <TrackIconBox $tone="#4b4a2f"><ClockIcon /></TrackIconBox>}
          {track.icon === 'wave' && <TrackIconBox $tone="#263447"><WaveTrackIcon /></TrackIconBox>}
        </IconFrame>
        <ExpandRow><ChevronRight size={24} strokeWidth={1.5} /></ExpandRow>
      </IconColumn>
      <Controls>
        <TrackTitle>{track.name}</TrackTitle>
        <ControlLine $mt={8}>
          <SmallGroup>
            <SmallKey $w={31}>M</SmallKey>
            <SmallKey $w={31}>S</SmallKey>
          </SmallGroup>
          <SmallGroup $ml={8}><SmallKey $w={31}>R</SmallKey></SmallGroup>
          <SmallGroup $ml={8}><SmallKey $w={92} $blue>Track</SmallKey></SmallGroup>
          <Toggle $on={track.on}><div /></Toggle>
          <Knob />
        </ControlLine>
        <ControlLine $mt={15}>
          <PopUp $w={109} $bg={track.muted ? '#3d3d3d' : '#2a9539'} $color={track.muted ? '#69e26c' : '#e4f3e4'}>
            Read <ChevronsUpDown size={15} />
          </PopUp>
          <PopUp $w={104} $ml={9} $bg="#3d3d3d" $color="#efe44c">
            Volume <ChevronsUpDown size={15} />
          </PopUp>
          <ValueBox>{track.value}</ValueBox>
        </ControlLine>
      </Controls>
    </TrackBody>
  </TrackRowWrap>
)

const AudioRegion = ({ region }) => {
  const width = region.to - region.x
  return (
    <Region $left={region.x - 472} $width={width}>
      <RegionHeader $bg="#3a6cab">
        {region.name}
        {region.icon === 'loop' && <LoopCircle />}
        {region.icon === 'linked' && <LinkedCircles />}
      </RegionHeader>
      <RegionBody $bg="#14202f" $edge="#2e5487">
        <RegionWave width={width} kind={region.wave} origin={region.x} />
      </RegionBody>
    </Region>
  )
}

const Fade = ({ fade }) => (
  <Crossfade $left={fade.x - 472} $width={fade.to - fade.x} $dashed={fade.dashed}>
    {fade.cross && (
      <svg viewBox="0 0 40 100" preserveAspectRatio="none" fill="none" stroke="#cfcfcf" strokeWidth="1">
        <path d="M0 2C14 30 28 70 38 100M0 100C10 60 22 28 40 0" />
      </svg>
    )}
  </Crossfade>
)

export default function App() {
  return (
    <Page>
      <GlobalStyle />
      <TopBar>
        <ToolGroup>
          <ToolSlot><TrayIcon /></ToolSlot>
          <ToolSlot><Info size={29} strokeWidth={1.6} /></ToolSlot>
          <ToolSlot><CircleHelp size={29} strokeWidth={1.6} /></ToolSlot>
          <ToolSlot><WindowDownIcon /></ToolSlot>
        </ToolGroup>
        <ToolGroup $ml={37}>
          <ToolSlot><DialIcon /></ToolSlot>
          <ToolSlot><MixerIcon /></ToolSlot>
          <ToolSlot><ScissorsIcon /></ToolSlot>
        </ToolGroup>
        <ToolGroup $ml={77}>
          <ToolSlot $w={54}><Glyph w={36} h={22} d="M17 2v18L2 11ZM33 2v18L18 11Z" /></ToolSlot>
          <ToolSlot $w={60}><Glyph w={36} h={22} d="M3 2v18l15-9ZM19 2v18l15-9Z" /></ToolSlot>
          <ToolSlot $w={52}><Glyph w={26} h={22} d="M2 2v18l15-9ZM21 2h3v18h-3Z" /></ToolSlot>
          <ToolSlot $w={58}><Glyph w={22} h={24} d="M3 2v20l17-10Z" /></ToolSlot>
          <ToolSlot $w={55}><RecordIcon /></ToolSlot>
          <ToolSlot $w={50}><CaptureIcon /></ToolSlot>
        </ToolGroup>
        <CycleButton><Repeat size={30} strokeWidth={2.8} /></CycleButton>
        <Lcd>
          <LcdBar>
            <Digits $pr={2}><span>00</span>1</Digits>
            <LcdLabel $pr={28}>BAR</LcdLabel>
          </LcdBar>
          <LcdBeat>
            <Digits $pr={25}>1</Digits>
            <LcdLabel $pr={22}>BEAT</LcdLabel>
          </LcdBeat>
          <LcdColumn>
            <LcdValue>120</LcdValue>
            <LcdValue $size={13} $bold>KEEP</LcdValue>
            <LcdValue $size={14} $dim $mt={-2}>TEMPO</LcdValue>
          </LcdColumn>
          <LcdColumn>
            <LcdValue>4/4</LcdValue>
            <LcdValue $mt={8}>Cmaj</LcdValue>
          </LcdColumn>
          <LcdMore><ChevronDown size={20} /></LcdMore>
        </Lcd>
        <ToolGroup $ml={19}>
          <ToolSlot><ShieldIcon /></ToolSlot>
          <ToolSlot><ForkIcon /></ToolSlot>
          <ToolSlot><SoloBoxIcon /></ToolSlot>
        </ToolGroup>
        <ToolGroup $ml={38}>
          <CountIn><span>1</span><span>2</span>34</CountIn>
          <ToolSlot $w={51}><MetronomeIcon /></ToolSlot>
        </ToolGroup>
        <VolumeTrack><VolumeThumb /></VolumeTrack>
      </TopBar>
      <BlueRule />
      <ControlBar>
        <Seg><SegItem $w={49}><UpTurnIcon /></SegItem></Seg>
        <Seg $ml={14}>
          <SegItem $w={89} $menu>Edit <ChevronDown className="chev" size={16} /></SegItem>
          <SegItem $w={144} $menu>Functions <ChevronDown className="chev" size={16} /></SegItem>
          <SegItem $w={98} $menu>View <ChevronDown className="chev" size={16} /></SegItem>
        </Seg>
        <Seg $ml={13}>
          <SegItem $w={48}><GridIcon /></SegItem>
          <SegItem $w={47} $on><ListIcon /></SegItem>
        </Seg>
        <Seg $ml={13}>
          <SegItem $w={47} $on><NodeIcon /></SegItem>
          <SegItem $w={47}><FlexIcon /></SegItem>
        </Seg>
        <Seg $ml={14}><SegItem $w={49} $on><PinIcon /></SegItem></Seg>
        <Seg $ml={327}>
          <SegItem $w={64} $gap={6}><PointerIcon /><ChevronDown className="chev" size={16} /></SegItem>
          <SegItem $w={64} $gap={5}><CrossIcon /><ChevronDown className="chev" size={16} /></SegItem>
        </Seg>
        <BarLabel $ml={78}>Snap:</BarLabel>
        <SelectBox $w={239} $ml={6}>Smart <ChevronsUpDown size={18} /></SelectBox>
        <BarLabel $ml={16}>Drag:</BarLabel>
        <SelectBox $w={152} $ml={6}>X-Fade <ChevronsUpDown size={18} /></SelectBox>
        <Seg $ml={13}><SegItem $w={46}><WaveButtonIcon /></SegItem></Seg>
        <Seg $ml={14}>
          <SegItem $w={47}><ZoomVIcon /></SegItem>
          <SegItem $w={47}><ZoomHIcon /></SegItem>
        </Seg>
        <Seg $ml={12}><SegItem $w={30} /></Seg>
      </ControlBar>
      <Main>
        <LeftPanel>
          <PanelTools>
            <PanelButton><Plus size={22} strokeWidth={1.8} /></PanelButton>
            <PanelButton $ml={15}><StackPlusIcon /></PanelButton>
            <PanelButton $ml={15} $w={50} $accent>H</PanelButton>
            <PanelButton $auto><BoxUpIcon /></PanelButton>
          </PanelTools>
          <ArrangementHeader>
            Arrangement (suspended)
            <AddCircle><Plus size={14} strokeWidth={3} /></AddCircle>
          </ArrangementHeader>
          <PanelPeek />
          {TRACKS.map(t => <TrackRow key={t.name} track={t} />)}
        </LeftPanel>
        <Timeline>
          <RulerTop>
            <Hatch $w={78} />
            <Cycle />
            <Hatch />
            <StartFlag />
            <RulerNumbers>
              {RULER_BARS.map(n => <RulerCell key={n} $light={n === 1 || n === 17}>{n}</RulerCell>)}
            </RulerNumbers>
          </RulerTop>
          <BeatStrip />
          <MarkerStrip>
            <Marker $w={101} $intro>Intro</Marker>
            {MARKER_YEARS.map((y, i) => <Marker key={i} $w={BEAT}><MarkerYear>{y}</MarkerYear></Marker>)}
          </MarkerStrip>
          <LanePeek viewBox="472 0 1448 4">
            <path d="M485 1.5H550" stroke="#f5e94e" strokeWidth="2" />
            <circle cx="485" cy="0" r="4" fill="#f5e94e" />
            <circle cx="550.5" cy="0" r="4" fill="#f5e94e" />
          </LanePeek>
          <Lane>
            <LaneStrip $tone="#343434" $line="#444" />
            <Region $top={3} $left={14} $width={1350}>
              <RegionHeader $bg="#1ea633">sonicpi_femadatatest_semitonegroups_1970-2021_newsubset</RegionHeader>
              <RegionBody $bg="#0f2b14" $edge="#2ba53a" />
            </Region>
            <Automation {...MARIMBA_AUTO} />
          </Lane>
          <Lane>
            <LaneStrip $tone="#2b2f3b" $line="#40444f">Weather Tracks #2</LaneStrip>
            <LaneGuide><GhostValue>+0.0 dB</GhostValue></LaneGuide>
          </Lane>
          {AUDIO_LANES.map((lane, i) => (
            <Lane key={i}>
              <LaneStrip $tone="#262a33" $line="#34383f" />
              {lane.regions.map(r => <AudioRegion key={r.x} region={r} />)}
              {lane.fades.map(f => <Fade key={f.x} fade={f} />)}
              {lane.auto && <Automation {...lane.auto} />}
            </Lane>
          ))}
          <PlayheadDots />
          <PlayheadHead width="27" height="26" viewBox="0 0 27 26">
            <path d="M3 1h21a2 2 0 0 1 2 2v10L13.5 25 1 13V3a2 2 0 0 1 2-2Z" fill="#b7b7b7" />
          </PlayheadHead>
          <PlayheadLine />
        </Timeline>
      </Main>
    </Page>
  )
}
